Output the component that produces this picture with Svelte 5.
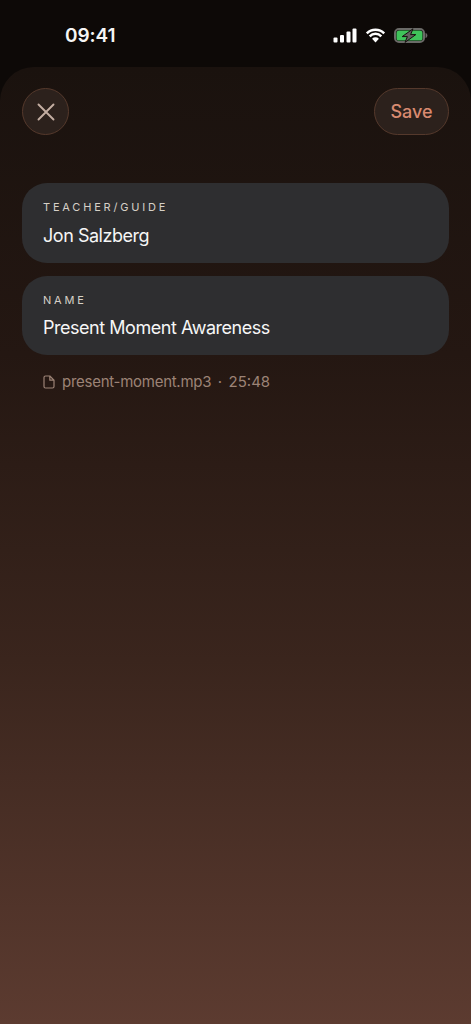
<script>
  const fields = [
    { label: 'TEACHER/GUIDE', value: 'Jon Salzberg' },
    { label: 'NAME', value: 'Present Moment Awareness' }
  ];
</script>

<div class="screen">
  <header class="status">
    <span class="time">09:41</span>
    <div class="status-icons">
      <svg width="24" height="15" viewBox="0 0 24 15">
        <rect x="0.5" y="9.5" width="4" height="5" rx="1" fill="#fff" />
        <rect x="7" y="7" width="4" height="7.5" rx="1" fill="#fff" />
        <rect x="13.5" y="3.5" width="4" height="11" rx="1" fill="#fff" />
        <rect x="19.5" y="0.5" width="4" height="14" rx="1" fill="#fff" />
      </svg>
      <svg width="21" height="15" viewBox="0 0 20 15">
        <path d="M1.300 5.400a12.200 12.200 0 0 1 17.400 0M4.200 8.300a8.100 8.100 0 0 1 11.600 0" fill="none" stroke="#fff" stroke-width="2.500" />
        <path d="M6.600 10.700a4.800 4.800 0 0 1 6.800 0L10 14.400z" fill="#fff" />
      </svg>
      <svg width="34" height="15" viewBox="0 0 34 15">
        <rect x="1" y="1" width="29" height="13" rx="4" fill="none" stroke="#6a6a67" stroke-width="2" />
        <rect x="2.500" y="2.500" width="26" height="10" rx="2.600" fill="#3fc35a" />
        <path d="M31.500 5v5c1.200-.3 1.900-1.300 1.900-2.500s-.7-2.200-1.900-2.500z" fill="#6a6a67" />
        <path d="M19 0.800 8.200 8.600h5.200l-2.400 5.800 10.800-7.800h-5.200z" fill="#62625f" stroke="#14100d" stroke-width="1" stroke-linejoin="round" />
      </svg>
    </div>
  </header>

  <main class="sheet">
    <div class="toolbar">
      <button class="close" aria-label="Close">
        <svg width="20" height="20" viewBox="0 0 20 20">
          <path d="M2.500 2.500 17.500 17.500M17.500 2.500 2.500 17.500" fill="none" stroke="#c4aea2" stroke-width="1.900" stroke-linecap="round" />
        </svg>
      </button>
      <button class="save">Save</button>
    </div>

    <div class="fields">
      {#each fields as field}
        <div class="field">
          <span class="label">{field.label}</span>
          <span class="value">{field.value}</span>
        </div>
      {/each}
    </div>

    <div class="file">
      <svg width="12" height="14" viewBox="0 0 12 14">
        <path d="M2.500 1h4.300L11 5.200v6.300A1.500 1.500 0 0 1 9.500 13h-7A1.500 1.500 0 0 1 1 11.500v-9A1.500 1.500 0 0 1 2.500 1zM6.800 1v4.200H11" fill="none" stroke="#9c8376" stroke-width="1.200" stroke-linejoin="round" />
      </svg>
      <span class="name">present-moment.mp3</span>
      <span class="dot">·</span>
      <span>25:48</span>
    </div>
  </main>
</div>

<style>
  :global(body) {
    margin: 0;
    background: #0d0907;
  }

  .screen {
    height: 1024px;
    overflow: hidden;
    display: flex;
    flex-direction: column;
    background: #0d0907;
    font-family: Inter, "Liberation Sans", sans-serif;
  }

  .status {
    height: 67px;
    flex: none;
    box-sizing: border-box;
    padding: 25px 43px 0 65px;
    display: flex;
    justify-content: space-between;
    align-items: flex-start;
  }

  .time {
    margin-top: 1px;
    color: #f5f5f5;
    font-size: 19px;
    font-weight: 600;
    line-height: 20px;
    letter-spacing: -0.1px;
  }

  .status-icons {
    display: flex;
    align-items: center;
    gap: 8px;
    height: 20px;
  }

  .sheet {
    flex: 1;
    box-sizing: border-box;
    padding: 21px 22px 0;
    border-radius: 34px 34px 0 0;
    background: linear-gradient(180deg, #1a120e 0%, #241712 30%, #3a251d 62%, #5c3b30 100%);
  }

  .toolbar {
    display: flex;
    justify-content: space-between;
    align-items: center;
  }

  button {
    box-sizing: border-box;
    height: 47px;
    padding: 0;
    border: 1px solid #55392c;
    background: #2c211c;
    font-family: inherit;
    cursor: pointer;
  }

  .close {
    width: 47px;
    border-radius: 50%;
    display: flex;
    align-items: center;
    justify-content: center;
  }

  .save {
    width: 75px;
    border-radius: 24px;
    color: #d98a70;
    font-size: 18px;
    font-weight: 500;
  }

  .fields {
    margin-top: 48px;
    display: flex;
    flex-direction: column;
    gap: 13px;
  }

  .field {
    height: 79.5px;
    box-sizing: border-box;
    padding: 17px 21px 0;
    border-radius: 25px;
    background: #2e2e30;
    display: flex;
    flex-direction: column;
    gap: 9.75px;
  }

  .label {
    color: #d6d0c7;
    font-size: 11px;
    line-height: 14px;
    letter-spacing: 2.8px;
  }

  .value {
    color: #f6f6f6;
    font-size: 18px;
    line-height: 24px;
    letter-spacing: -0.47px;
  }

  .file {
    margin: 17px 0 0 21px;
    display: flex;
    align-items: center;
    gap: 7px;
    color: #9c8376;
    font-size: 15px;
    line-height: 20px;
  }

  .name {
    letter-spacing: -0.27px;
  }

  .dot {
    margin: 0 -0.5px;
  }
</style>
